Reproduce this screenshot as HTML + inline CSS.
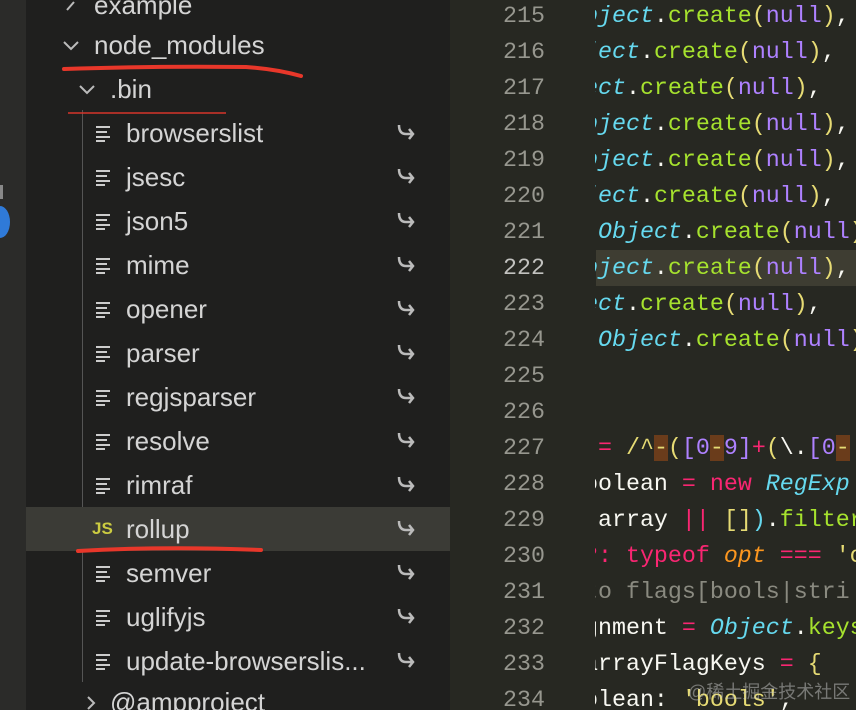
<!DOCTYPE html>
<html><head><meta charset="utf-8"><style>
*{margin:0;padding:0;box-sizing:border-box}
html,body{width:856px;height:710px;overflow:hidden}
body{background:#272822;position:relative;font-family:"Liberation Sans",sans-serif}
#act{position:absolute;left:0;top:0;width:26px;height:710px;background:#2b2b29}
#side{position:absolute;left:26px;top:0;width:424px;height:710px;background:#1f1f1e;overflow:hidden}
.row{position:absolute;left:0;width:424px;height:44px;color:#d4d4d4;font-size:26px;line-height:44px}
.row .t{position:absolute;top:0}
.sel{background:#3b3b36}
.ic{position:absolute}
#guide{position:absolute;left:56px;top:110px;width:1px;height:572px;background:#555}
#ed{position:absolute;left:450px;top:0;width:406px;height:710px}
.ln{position:absolute;left:0;width:95px;text-align:right;color:#97978f;font-family:"Liberation Mono",monospace;font-size:23.3px;line-height:36px}
#code{position:absolute;left:595px;top:0;width:261px;height:710px;overflow:hidden;font-family:"Liberation Mono",monospace;font-size:23.3px;color:#f8f8f2}
.cl{position:absolute;left:3px;height:36px;line-height:36px;white-space:pre}
.pf{position:absolute;right:100%;top:0}
.b{color:#66d9ef;font-style:italic}.g{color:#a6e22e}.y{color:#e6db74}.p{color:#ae81ff}.r{color:#f92672}.o{color:#fd971f;font-style:italic}.c{color:#8a8a80}.w{color:#f8f8f2}.hb{background:#6a3c1b}
</style></head><body>
<div id="act"><div style="position:absolute;left:-10px;top:206px;width:20px;height:32px;border-radius:50%;background:#2f7ad8"></div><div style="position:absolute;left:0;top:185px;width:3px;height:14px;background:#888"></div></div>
<div id="side">
<div id="guide"></div>
<svg class="ic" style="left:38px;top:-2px" width="18" height="14"><path d="M3 12 L10 4" stroke="#bbb" stroke-width="2" fill="none"/></svg>
<div class="row" style="top:-17px"><span class="t" style="left:68px">example</span></div>
<div class="row" style="top:23px"><svg class="ic" style="left:36px;top:16px" width="20" height="14"><path d="M2 3 L9 10 L16 3" stroke="#bbb" stroke-width="2" fill="none"/></svg><span class="t" style="left:68px">node_modules</span></div>
<div class="row" style="top:67px"><svg class="ic" style="left:52px;top:16px" width="20" height="14"><path d="M2 3 L9 10 L16 3" stroke="#bbb" stroke-width="2" fill="none"/></svg><span class="t" style="left:84px">.bin</span></div>
<div class="row sel" style="top:507px"></div>
<div id="files"></div>
<svg class="ic" style="left:0;top:0" width="424" height="710">
<path d="M38 69 Q120 66 220 67 Q250 69 275 76" stroke="#e8372a" stroke-width="4" fill="none" stroke-linecap="round"/>
<path d="M42 113 L200 113" stroke="#d6352a" stroke-width="1.5" fill="none"/>
<path d="M52 551 Q140 546 235 550" stroke="#e8372a" stroke-width="4" fill="none" stroke-linecap="round"/>
<path d="M62 697 L68 703 L62 709" stroke="#bbb" stroke-width="2" fill="none"/>
</svg>
<div class="row" style="top:680px"><span class="t" style="left:84px">@ampproject</span></div>
</div>
<div id="ed">
<div style="position:absolute;left:146px;top:250px;width:260px;height:36px;background:#3e3d32"></div>
</div>
<div id="code"></div>
<div style="position:absolute;left:688px;top:678px;white-space:nowrap;color:rgba(200,200,200,.5);font-size:18px;font-family:'Liberation Sans','Noto Sans CJK SC',sans-serif">@稀土掘金技术社区</div>
<script>
var names=["browserslist","jsesc","json5","mime","opener","parser","regjsparser","resolve","rimraf","rollup","semver","uglifyjs","update-browserslis..."];
var h="";
names.forEach(function(n,i){
 var top=111+i*44;
 var icon = n=="rollup" ? '<span class="ic" style="left:66px;top:0;color:#cbcb41;font-size:17px;font-weight:bold">JS</span>' :
 '<svg class="ic" style="left:70px;top:14px" width="18" height="18"><path d="M0 2H14M0 7H11M0 12H14M0 16H9" stroke="#ccc" stroke-width="2"/></svg>';
 h+='<div class="row" style="top:'+top+'px">'+icon+'<span class="t" style="left:100px">'+n+'</span><svg class="ic" style="left:370px;top:12px" width="20" height="20"><path d="M3 2 Q3 11 10 11 L17 11 M13 6 L17 11 L13 16" stroke="#bbb" stroke-width="2.5" fill="none"/></svg></div>';
});
document.getElementById('files').innerHTML=h;
var ed=document.getElementById('ed'),s="";
for(var i=0;i<20;i++){s+='<div class="ln" style="top:'+(-2+i*36)+'px;'+(i==7?'color:#c2c2bf':'')+'">'+(215+i)+'</div>';}
ed.innerHTML+=s;
function oc(pf,pre){return '<span class="pf b">'+pf+'</span>'+pre+'<span class="w">.</span><span class="g">create</span><span class="y">(</span><span class="p">null</span><span class="y">)</span><span class="w">,</span>';}
var L=[
oc('Ob','<span class="b">ject</span>'),oc('Obj','<span class="b">ect</span>'),oc('Obje','<span class="b">ct</span>'),
oc('Ob','<span class="b">ject</span>'),oc('Ob','<span class="b">ject</span>'),oc('Obj','<span class="b">ect</span>'),
oc('','<span class="b">Object</span>'),oc('Ob','<span class="b">ject</span>'),oc('Obje','<span class="b">ct</span>'),oc('','<span class="b">Object</span>'),
'','',
'<span class="r">=</span> <span class="y">/^</span><span class="y hb">-</span><span class="y">(</span><span class="p">[0</span><span class="y hb">-</span><span class="p">9]</span><span class="r">+</span><span class="y">(</span><span class="w">\\.</span><span class="p">[0</span><span class="y hb">-</span>',
'<span class="pf">bo</span>olean <span class="r">=</span> <span class="r">new</span> <span class="b">RegExp</span>',
'<span class="pf">(</span>array <span class="r">||</span> <span class="y">[]</span><span class="b" style="font-style:normal">)</span>.<span class="g">filter</span>',
'<span class="pf r">?</span><span class="r">: typeof</span> <span class="o">opt</span> <span class="r">===</span> <span class="y">\'o</span>',
'<span class="c"><span class="pf">t</span>o flags[bools|stri</span>',
'<span class="pf">sig</span>nment <span class="r">=</span> <span class="b">Object</span>.<span class="g">keys</span>',
'<span class="pf">a</span>rrayFlagKeys <span class="r">=</span> <span class="y">{</span>',
'<span class="pf">bo</span>lean: <span class="y">\'bools\'</span>,'
];
var c="";L.forEach(function(t,i){c+='<div class="cl" style="top:'+(-2+i*36)+'px">'+t+'</div>';});
document.getElementById('code').innerHTML=c;
</script>
</body></html>
